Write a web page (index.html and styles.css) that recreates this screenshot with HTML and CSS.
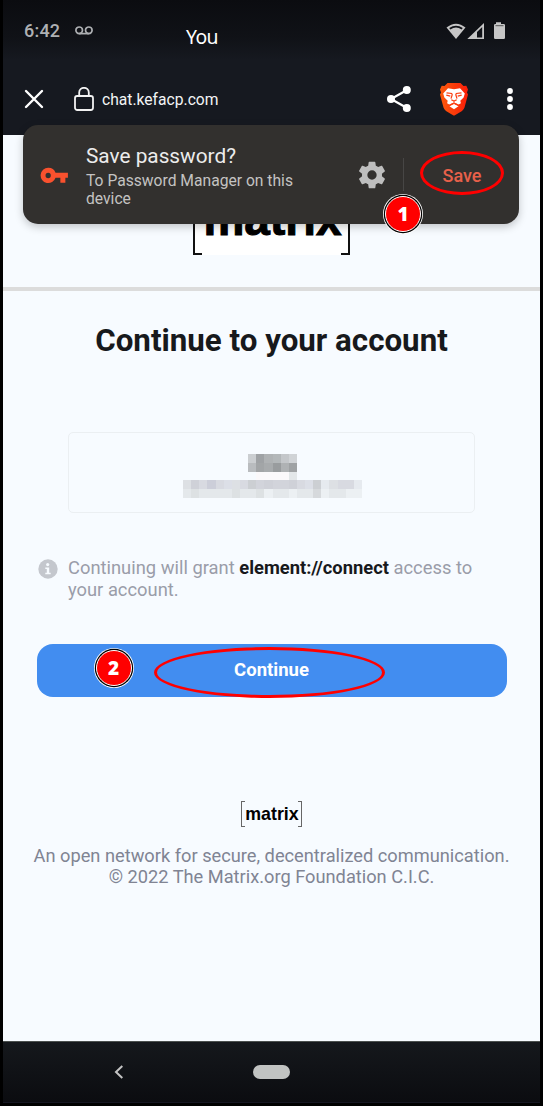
FILE: index.html
```html
<!DOCTYPE html>
<html lang="en">
<head>
<meta charset="utf-8">
<title>Continue to your account</title>
<link rel="stylesheet" href="styles.css">
</head>
<body>
<div class="phone">
  <header class="top">
    <div class="status">
      <span class="time">6:42</span>
      <svg class="voicemail" width="18" height="9" viewBox="0 0 18 9" fill="none" stroke="#aeb0b3" stroke-width="1.7"><circle cx="4.2" cy="4.3" r="3.3"/><circle cx="13.8" cy="4.3" r="3.3"/><path d="M4.2 7.6h9.6"/></svg>
      <span class="you">You</span>
      <svg class="signals" width="60" height="20" viewBox="0 0 60 20">
        <path d="M0.5 5.5Q10 -2.2 19.500 5.500L10 17Z" fill="#c6c6c6"/><path d="M3.200 6.100Q10 1.300 16.800 6.100L15.600 7.400Q10 3.800 4.400 7.400Z" fill="#101217"/>
        <path d="M21.300 17L38 1V17Z" fill="#c6c6c6"/><path d="M31 10L36.200 5V15.500H31Z" fill="#101217"/>
        <path d="M50 0.300h5v1.700h2.700q1.300 0 1.300 1.300v12.400q0 1.300-1.300 1.300h-8.400q-1.300 0-1.300-1.300V3.300q0-1.300 1.300-1.300h.7z" fill="#c6c6c6"/><path d="M49.500 3.700h8" stroke="#555" stroke-width="1"/>
      </svg>
    </div>
    <div class="toolbar">
      <svg class="close" width="20" height="20" viewBox="0 0 20 20" stroke="#fff" stroke-width="2.400" stroke-linecap="round"><path d="M2 2l16 16M18 2L2 18"/></svg>
      <svg class="lock" width="20" height="24" viewBox="0 0 20 24" fill="none" stroke="#f2f2f2" stroke-width="1.800"><rect x="1" y="9" width="18" height="14" rx="2.200"/><path d="M5.200 9V5.600a4.800 4.800 0 0 1 9.600 0V9"/></svg>
      <span class="url">chat.kefacp.com</span>
      <svg class="share" width="26" height="28" viewBox="0 0 26 28" fill="#fff"><path d="M21 5L5 14l16 9" fill="none" stroke="#fff" stroke-width="2.200"/><circle cx="20.800" cy="5" r="4"/><circle cx="5" cy="14" r="4"/><circle cx="20.800" cy="23" r="4"/></svg>
      <svg class="brave" width="30" height="34" viewBox="0 0 30 34">
        <defs><linearGradient id="flame"><stop offset="0" stop-color="#fb5a0c"/><stop offset="1" stop-color="#fa1c08"/></linearGradient></defs>
        <path d="M8.500 1h13l3 3 2.800-.2 1.700 3.700-1 3 1 2-3.500 13q-.6 2-2.500 3.400L15.500 33.500h-1L7 28.900q-1.900-1.400-2.500-3.400L1 12.500l1-2-1-3 1.700-3.700 2.800.2z" fill="url(#flame)"/>
        <path d="M9 6.300l6 .9 6-.9 4.800 5.300-1.200 3.800-3.300 3.300.6 2.500-2.600 1.500-2.300-1.200h-4l-2.300 1.200-2.600-1.500.6-2.500-3.300-3.300-1.200-3.800z" fill="#fff"/>
        <path d="M10.500 24.300l4.500-2.300 4.500 2.300-4.500 3z" fill="#fff"/>
        <path d="M7.500 10.900l5.200.6.500 1.200-1.200 4M22.500 10.900l-5.200.6-.5 1.200 1.200 4M7.300 13.200l4 1M22.700 13.200l-4 1M12.300 17.700l2.700 1.300 2.700-1.300M15 19v2.200M10.300 23.300l4.700-2.300 4.700 2.300" fill="none" stroke="#fb3d10" stroke-width="1.200"/>
      </svg>
      <svg class="dots" width="6" height="22" viewBox="0 0 6 22" fill="#fff"><circle cx="3" cy="3" r="2.900"/><circle cx="3" cy="11" r="2.900"/><circle cx="3" cy="19" r="2.900"/></svg>
    </div>
  </header>
  <div class="site-head"><div class="logo logo-big"><span>matrix</span></div></div>
  <main class="content">
    <h1>Continue to your account</h1>
    <div class="account">
      <svg class="mosaic" width="179" height="44" viewBox="0 0 22 5" preserveAspectRatio="none" shape-rendering="crispEdges">
        <g stroke-width="1">
          <path d="M8 .5h1" stroke="#cbced1"/><path d="M9 .5h1" stroke="#9fa2a5"/><path d="M10 .5h1" stroke="#afb2b4"/><path d="M11 .5h1" stroke="#b3b7b9"/><path d="M12 .5h1" stroke="#c4c7ca"/><path d="M13 .5h1" stroke="#d0d3d6"/>
          <path d="M8 1.500h1" stroke="#b9bcbf"/><path d="M9 1.500h2" stroke="#a2a5a7"/><path d="M10 1.500h1" stroke="#a8abad"/><path d="M11 1.500h1" stroke="#999c9e"/><path d="M12 1.500h1" stroke="#afb2b4"/><path d="M13 1.500h1" stroke="#9fa2a4"/>
          <path d="M9 2.500h4" stroke="#fbf9fb"/><path d="M13 2.500h1" stroke="#e3e7e9"/>
          <path d="M0 3.500h1M6 3.500h1M18 3.500h1" stroke="#dde0e4"/><path d="M1 3.500h1M10 3.500h1M13 3.500h1" stroke="#cfd1d8"/><path d="M2 3.500h1M4 3.500h1M7 3.500h1M14 3.500h1M19 3.500h2" stroke="#d8dae1"/><path d="M3 3.500h1" stroke="#ccced9"/><path d="M5 3.500h1M15 3.500h1" stroke="#dcdfe7"/><path d="M8 3.500h1M16 3.500h1" stroke="#cccfd3"/><path d="M9 3.500h1M11 3.500h2" stroke="#d2d4db"/><path d="M17 3.500h1M21 3.500h1" stroke="#e6eaef"/>
          <path d="M0 4.500h22" stroke="#e4e8eb"/><path d="M1 4.500h1M6 4.500h1M9 4.500h1" stroke="#dde1e3"/><path d="M10 4.500h1M13 4.500h1M17 4.500h1M20 4.500h2" stroke="#ecf0f3"/><path d="M16 4.500h1" stroke="#d6d9dc"/>
        </g>
      </svg>
    </div>
    <div class="notice">
      <svg width="20" height="20" viewBox="0 0 20 20"><circle cx="10" cy="10" r="9.700" fill="#c4c7cd"/><circle cx="9.700" cy="5.600" r="1.600" fill="#f7fbff"/><path d="M7.300 8.500h3.900v5.300h1.500v1.500H7.300v-1.500h1.500V10H7.300z" fill="#f7fbff"/></svg>
      <p>Continuing will grant <b>element://connect</b> access to<br>your account.</p>
    </div>
    <button class="primary">Continue<i class="ring ring-continue"></i><span class="step step-two">2</span></button>
    <footer>
      <div class="logo logo-small"><span>matrix</span></div>
      <p class="tagline">An open network for secure, decentralized communication.</p>
      <p class="copyright">© 2022 The Matrix.org Foundation C.I.C.</p>
    </footer>
  </main>
  <nav class="navbar">
    <svg width="10" height="14" viewBox="0 0 10 14" fill="none" stroke="#c4c4c4" stroke-width="2"><path d="M8.300 1L2 7l6.300 6"/></svg>
    <span class="home"></span>
  </nav>
  <section class="prompt">
    <svg class="key" width="29" height="17" viewBox="0 0 30 18"><path fill="#f9512e" fill-rule="evenodd" d="M8.300.8a8.100 8.100 0 0 1 7.800 5.300H29.200v5.300h-2.700V16.700h-5.300v-5.300h-5.100A8.100 8.100 0 1 1 8.300.8zm0 5.400a2.800 2.800 0 1 0 0 5.600 2.800 2.800 0 0 0 0-5.600z"/></svg>
    <div class="prompt-text"><h2>Save password?</h2><p>To Password Manager on this<br>device</p></div>
    <svg class="gear" width="32" height="32" viewBox="0 0 24 24" fill="#bebebe"><path d="M19.430 12.980c.04-.32.07-.64.07-.98s-.03-.66-.07-.98l2.110-1.650c.19-.15.24-.42.12-.64l-2-3.460c-.12-.22-.39-.3-.61-.22l-2.490 1c-.52-.4-1.080-.73-1.690-.98l-.38-2.650C14.460 2.180 14.250 2 14 2h-4c-.25 0-.46.18-.49.42l-.38 2.650c-.61.25-1.170.59-1.690.98l-2.490-1c-.23-.09-.49 0-.61.22l-2 3.460c-.13.22-.07.49.12.64l2.110 1.650c-.04.32-.07.65-.07.98s.03.66.07.98l-2.110 1.650c-.19.15-.24.42-.12.64l2 3.460c.12.22.39.3.61.22l2.490-1c.52.4 1.080.73 1.690.98l.38 2.650c.03.24.24.42.49.42h4c.25 0 .46-.18.49-.42l.38-2.650c.61-.25 1.170-.59 1.690-.98l2.490 1c.23.09.49 0 .61-.22l2-3.460c.12-.22.07-.49-.12-.64l-2.110-1.650zM12 15.500A3.500 3.500 0 1 1 12 8.500a3.500 3.500 0 0 1 0 7z"/></svg>
    <span class="divider"></span>
    <span class="save">Save</span>
    <i class="ring ring-save"></i><span class="step step-one">1</span>
  </section>
</div>
</body>
</html>
```
FILE: styles.css
```css
* { box-sizing: border-box; }
body { margin: 0; background: #000; font-family: Roboto, sans-serif; }
h1, h2, p { margin: 0; font-weight: 400; white-space: nowrap; }
svg { display: block; flex: none; }
.phone { position: relative; width: 543px; height: 1106px; padding: 0 3px; overflow: hidden; background: #000; }
.top { height: 135px; background: linear-gradient(#0b0c10 0, #101217 38px, #161920 60px, #161920 100%); }
.status { display: flex; height: 63px; padding: 0 0 0 21px; }
.time { width: 51px; padding-top: 20px; font-size: 18px; line-height: 22px; font-weight: 500; letter-spacing: .2px; color: #aeb0b3; }
.voicemail { margin-top: 26px; }
.you { width: 261px; margin-left: 93px; padding-top: 24px; font: 19.4px/26px "Noto Sans", sans-serif; letter-spacing: -.6px; color: #fff; }
.signals { margin-top: 22px; margin-left: -1px; }
.toolbar { display: flex; align-items: center; height: 72px; padding: 0 0 0 21px; color: #f3f4f5; }
.close { margin-right: 30px; }
.url { width: 284px; margin-left: 8px; padding-top: 2px; font-size: 15.65px; line-height: 20px; }
.share { margin-right: 28px; }
.brave { margin-right: 38px; margin-left: -1px; }
.site-head { display: flex; justify-content: center; align-items: flex-end; height: 156px; padding-bottom: 33px; background: #f7fbff; border-bottom: 4px solid #dcdcdc; }
.logo { position: relative; display: flex; align-items: center; justify-content: center; color: #000; font-family: "Liberation Sans", sans-serif; font-weight: 700; }
.logo::before, .logo::after { content: ""; position: absolute; top: 0; bottom: 0; border: solid #111; }
.logo::before { left: 0; border-right: 0 !important; }
.logo::after { right: 0; border-left: 0 !important; }
.logo-big { width: 157px; height: 67px; background: #fff; font-size: 46px; line-height: 58px; padding: 0 0 6px 2px; margin-bottom: -1px; -webkit-text-stroke: 1px #000; }
.logo-big::before, .logo-big::after { width: 7px; border-width: 2px; }
.logo-small { width: 61px; height: 26px; font-size: 17.8px; padding-left: 1px; }
.logo-small::before, .logo-small::after { width: 3px; border-width: 1px; border-color: #666; }
.content { height: 750px; background: #f7fbff; padding: 30px 34px 0; }
h1 { text-align: center; font-size: 31.3px; line-height: 40px; font-weight: 700; color: #17191c; }
.account { display: flex; justify-content: center; width: 407px; height: 81px; margin: 71px 0 0 31px; padding: 21px 0 0 2px; border: 1px solid #ebeff2; border-radius: 5px; }
.notice { display: flex; gap: 10px; margin-top: 45px; padding-left: 1px; color: #9a9da9; font-size: 18.35px; line-height: 21.5px; }
.notice p { height: 43px; margin-top: -1px; }
.notice svg { margin-top: 1px; }
.notice b { color: #17191c; font-weight: 700; }
.primary { position: relative; display: block; width: 470px; height: 53px; margin: 44px 0 0 -.5px; padding: 0; border: 0; border-radius: 16px; background: #428df0; color: #fff; font: 700 18.5px/53px Roboto, sans-serif; }
.ring { position: absolute; border: 3px solid #f00; border-radius: 50%; }
.step { position: absolute; width: 36px; height: 36px; border: 1px solid #fff; border-radius: 50%; background: #f00; box-shadow: 0 0 0 1.2px #000, 0 0 0 2px #fff; color: #fff; font: 800 19px/34px "Open Sans", sans-serif; text-align: center; }
.ring-continue { left: 117px; top: 3px; width: 231px; height: 51px; }
.step-two { left: 59px; top: 6px; }
footer { display: flex; flex-direction: column; align-items: center; padding-top: 104px; color: #808493; font-size: 18.24px; line-height: 21px; }
.tagline { margin-top: 18px; }
.navbar { display: flex; align-items: center; height: 62px; padding-left: 111px; background: linear-gradient(#15181c, #0b0c10); border-top: 1px solid #4b504e; border-bottom: 1px solid #151622; }
.home { width: 37px; height: 14px; margin-left: 129px; border-radius: 7px; background: #c1c3c2; }
.prompt { position: absolute; left: 23px; top: 125px; width: 496px; height: 99px; display: flex; border-radius: 15px; background: #32302e; box-shadow: 0 3px 9px rgba(0,0,0,.22); }
.key { margin: 42px 0 0 17px; }
.prompt-text { width: 273px; padding: 19px 0 0 17px; color: #c4c3c2; font-size: 15.65px; line-height: 18px; }
h2 { font-size: 20.8px; line-height: 25px; color: #ececec; margin-bottom: 3px; }
.gear { margin: 34px 0 0 13.5px; }
.divider { width: 1px; height: 33px; margin: 33px 0 0 15.5px; background: #474645; }
.save { margin: 39px 0 0 38.5px; color: #e8604a; font-size: 18px; line-height: 24px; font-weight: 500; }
.ring-save { left: 397px; top: 26px; width: 84px; height: 44px; }
.step-one { left: 362px; top: 71px; }
```
